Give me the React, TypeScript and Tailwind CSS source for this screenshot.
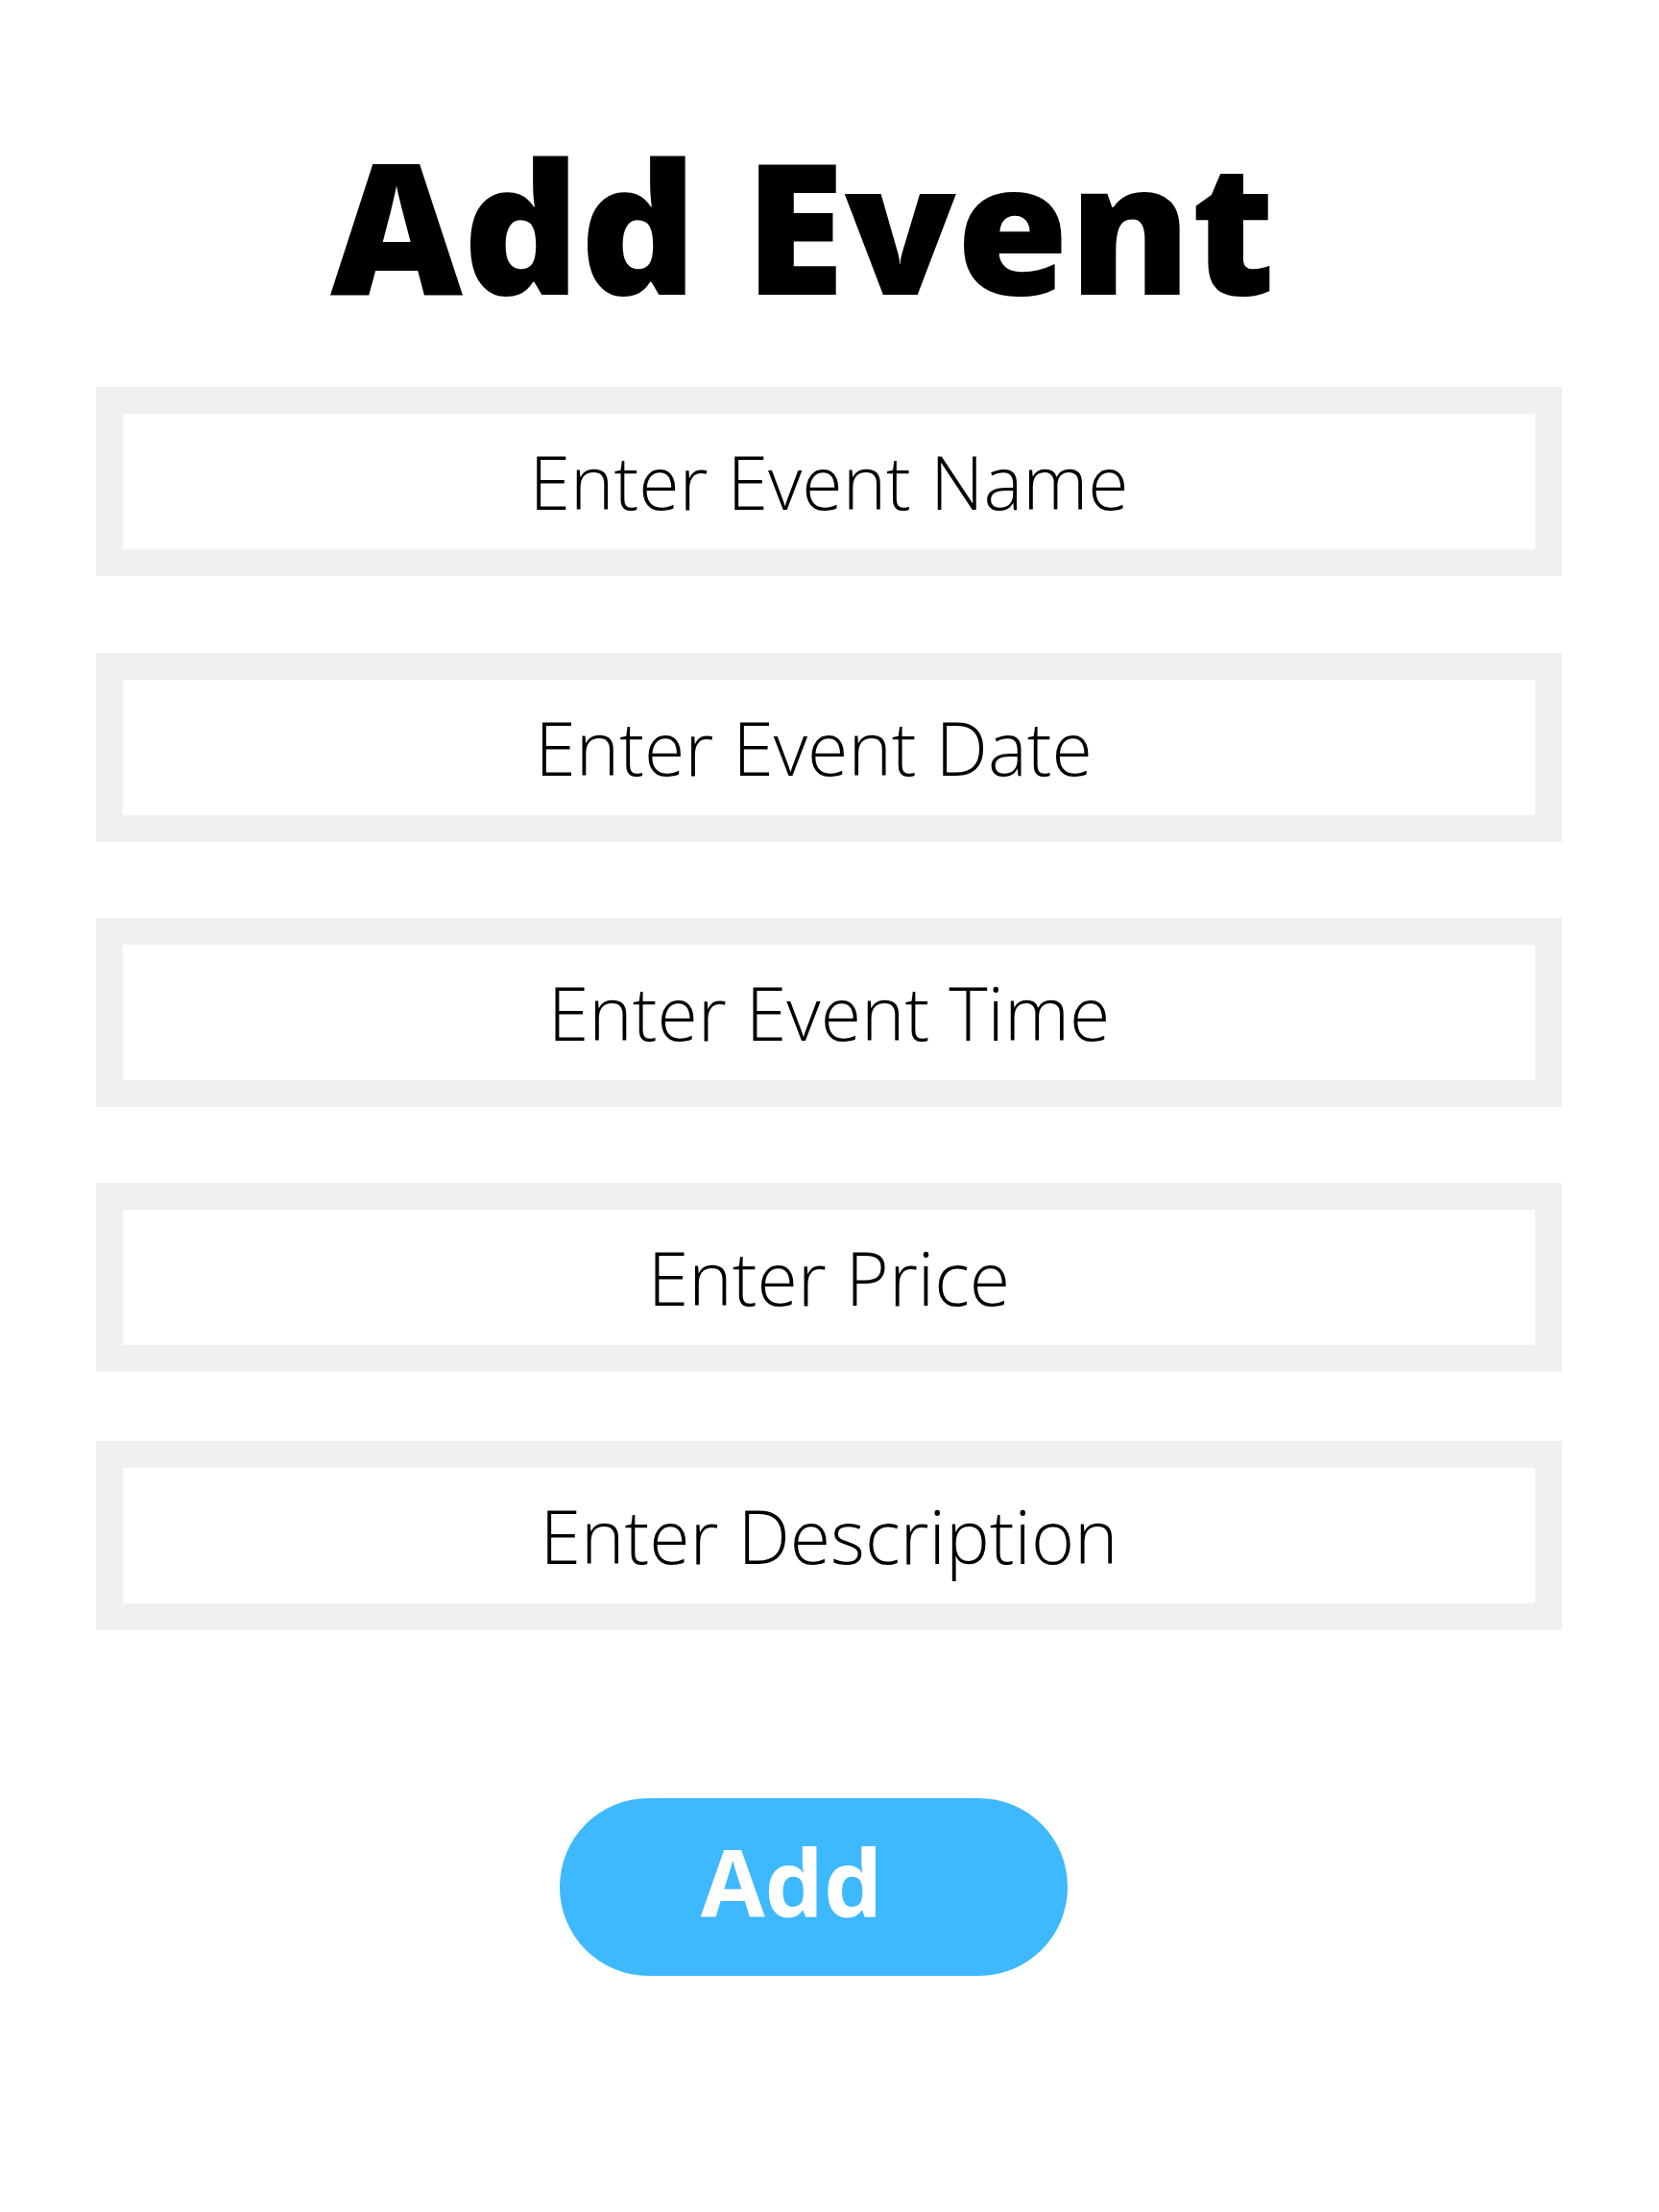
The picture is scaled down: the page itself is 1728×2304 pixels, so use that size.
import React from "react";

const fields = [
  { label: "Enter Event Name", mt: "mt-[74px]", pr: "pr-0" },
  { label: "Enter Event Date", mt: "mt-[80px]", pr: "pr-[32px]" },
  { label: "Enter Event Time", mt: "mt-[79px]", pr: "pr-0" },
  { label: "Enter Price", mt: "mt-[79px]", pr: "pr-0" },
  { label: "Enter Description", mt: "mt-[72px]", pr: "pr-0" },
];

export default function App() {
  return (
    <div
      className="w-[1728px] h-[2304px] bg-white flex flex-col"
      style={{ fontFamily: '"Open Sans", "Noto Sans", sans-serif' }}
    >
      <h1 className="mt-[139px] h-[190px] text-center pr-[56px] text-[190px] leading-none font-extrabold text-black">
        Add Event
      </h1>
      {fields.map((f) => (
        <div
          key={f.label}
          className={`${f.mt} ${f.pr} ml-[100px] w-[1527px] h-[197px] border-[28px] border-[#eef0f2] bg-white flex items-center justify-center`}
        >
          <span className="text-[77px] leading-none font-light text-black">
            {f.label}
          </span>
        </div>
      ))}
      <button className="mt-[175px] ml-[583px] w-[529px] h-[185px] rounded-full bg-[#3eb8fe] flex items-center justify-center pr-[46px] pb-[12px]">
        <span className="text-[97px] leading-none font-bold text-white">Add</span>
      </button>
    </div>
  );
}
